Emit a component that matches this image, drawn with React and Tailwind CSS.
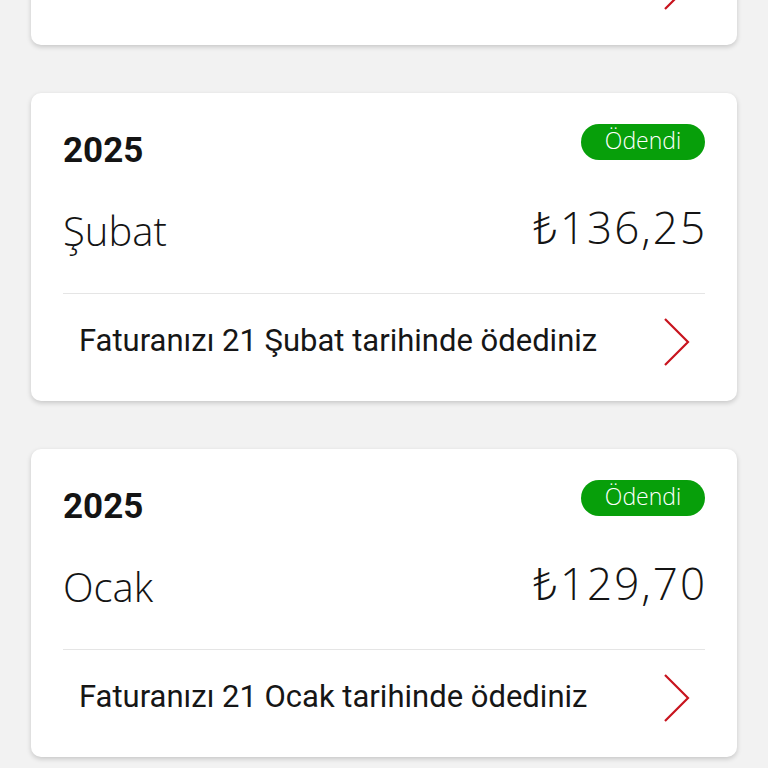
import React from 'react'

const bills = [
  { year: '2025', month: 'Mart', amount: '₺140,10', note: 'Faturanızı 21 Mart tarihinde ödediniz' },
  { year: '2025', month: 'Şubat', amount: '₺136,25', note: 'Faturanızı 21 Şubat tarihinde ödediniz' },
  { year: '2025', month: 'Ocak', amount: '₺129,70', note: 'Faturanızı 21 Ocak tarihinde ödediniz' },
]

const Chevron = () => (
  <svg width="28" height="48" viewBox="0 0 28 48" fill="none" className="shrink-0">
    <path d="M2 1 L25 24 L2 47" stroke="#c8141e" strokeWidth="2.2" strokeLinejoin="miter" />
  </svg>
)

const BillCard = ({ bill, className = '' }) => (
  <div className={`bg-white rounded-[10px] shadow-[0_2px_5px_rgba(0,0,0,0.18)] pt-[31px] ${className}`}>
    <div className="px-8">
      <div className="flex justify-between items-start h-[36px]">
        <div
          className="text-[35px] leading-[40px] font-bold text-[#141414] mt-[7px]"
          style={{ fontFamily: 'Roboto, "Liberation Sans", sans-serif' }}
        >
          {bill.year}
        </div>
        <div
          className="h-[36px] w-[124px] rounded-full bg-[#079f0a] text-white flex items-center justify-center text-[23px] font-light pb-[3px]"
          style={{ fontFamily: '"Open Sans", "Noto Sans", sans-serif' }}
        >
          Ödendi
        </div>
      </div>
      <div
        className="flex justify-between items-end mt-[40px] h-[60px] text-[#141414] font-light"
        style={{ fontFamily: '"Open Sans", "Noto Sans", sans-serif' }}
      >
        <div className="text-[40px] leading-[50px] mb-[4px]">{bill.month}</div>
        <div className="text-[44px] leading-[56px] tracking-[2px] -mr-[2px] mb-[5px]">{bill.amount}</div>
      </div>
      <div className="border-t border-[#e5e5e5] mt-[33px]" />
    </div>
    <div className="flex items-center justify-between pl-12 pr-[46px] h-[107px] pb-[12px]">
      <div
        className="text-[31px] text-[#161616]"
        style={{ fontFamily: 'Roboto, "Liberation Sans", sans-serif' }}
      >
        {bill.note}
      </div>
      <Chevron />
    </div>
  </div>
)

export default function App() {
  return (
    <div className="w-[768px] h-[768px] overflow-hidden bg-[#f2f2f2]">
      <div className="px-[31px] flex flex-col gap-[48px]">
        <BillCard bill={bills[0]} className="-mt-[263px]" />
        <BillCard bill={bills[1]} />
        <BillCard bill={bills[2]} />
      </div>
    </div>
  )
}
